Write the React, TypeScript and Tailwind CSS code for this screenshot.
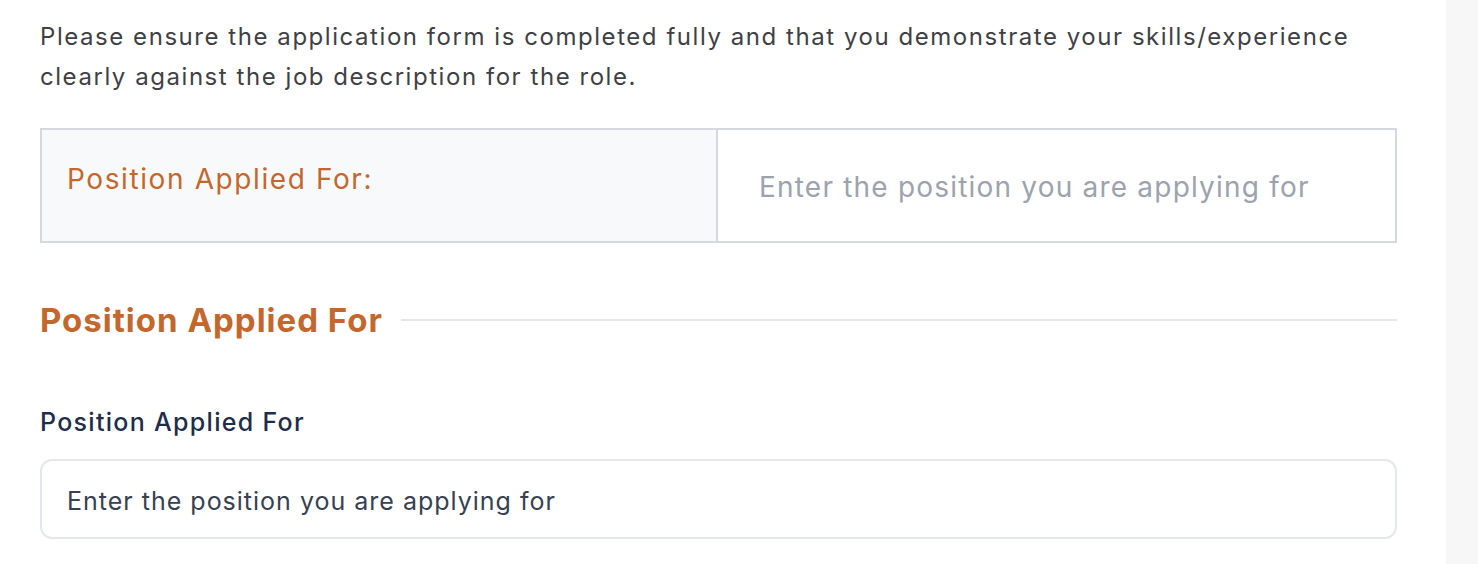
import React from "react";

export default function App() {
  return (
    <div
      className="flex w-[1478px] h-[564px] overflow-hidden bg-white"
      style={{ fontFamily: "Inter, 'Noto Sans', sans-serif" }}
    >
      <div className="w-[1446px] shrink-0 pl-[40px] pr-[49px] pt-[17px]">
        <p className="text-[24px] leading-[40px] text-[#3f3f46] tracking-[1.55px]">
          Please ensure the application form is completed fully and that you demonstrate your skills/experience
          clearly against the job description for the role.
        </p>

        <div className="mt-[31px] flex h-[115px] border-2 border-[#d5d9df]">
          <div className="w-[676px] shrink-0 bg-[#f8f9fb] border-r-2 border-[#d5d9df] pl-[25px] pt-[31px]">
            <span className="text-[28px] leading-[36px] text-[#c4672d] tracking-[1.6px]">Position Applied For:</span>
          </div>
          <div className="flex-1 flex items-center pl-[41px] pt-[2px]">
            <span className="text-[28px] leading-[36px] text-[#9ca3af] tracking-[1.2px]">Enter the position you are applying for</span>
          </div>
        </div>

        <div className="mt-[55px] flex items-center gap-[18px]">
          <h2 className="text-[33px] leading-[44px] font-bold text-[#c4672d] whitespace-nowrap tracking-[1px]">Position Applied For</h2>
          <div className="flex-1 h-[2px] bg-[#e5e7eb]"></div>
        </div>

        <div className="mt-[63px] text-[25px] leading-[34px] font-medium text-[#1e2d4a] tracking-[1.3px]">Position Applied For</div>

        <div className="mt-[20px] h-[80px] rounded-[12px] border-2 border-[#e3e8ef] flex items-center pl-[25px] pt-[3px]">
          <span className="text-[25px] leading-[34px] text-[#374151] tracking-[1px]">Enter the position you are applying for</span>
        </div>
      </div>
      <div className="flex-1 bg-[#f7f7f8]"></div>
    </div>
  );
}
